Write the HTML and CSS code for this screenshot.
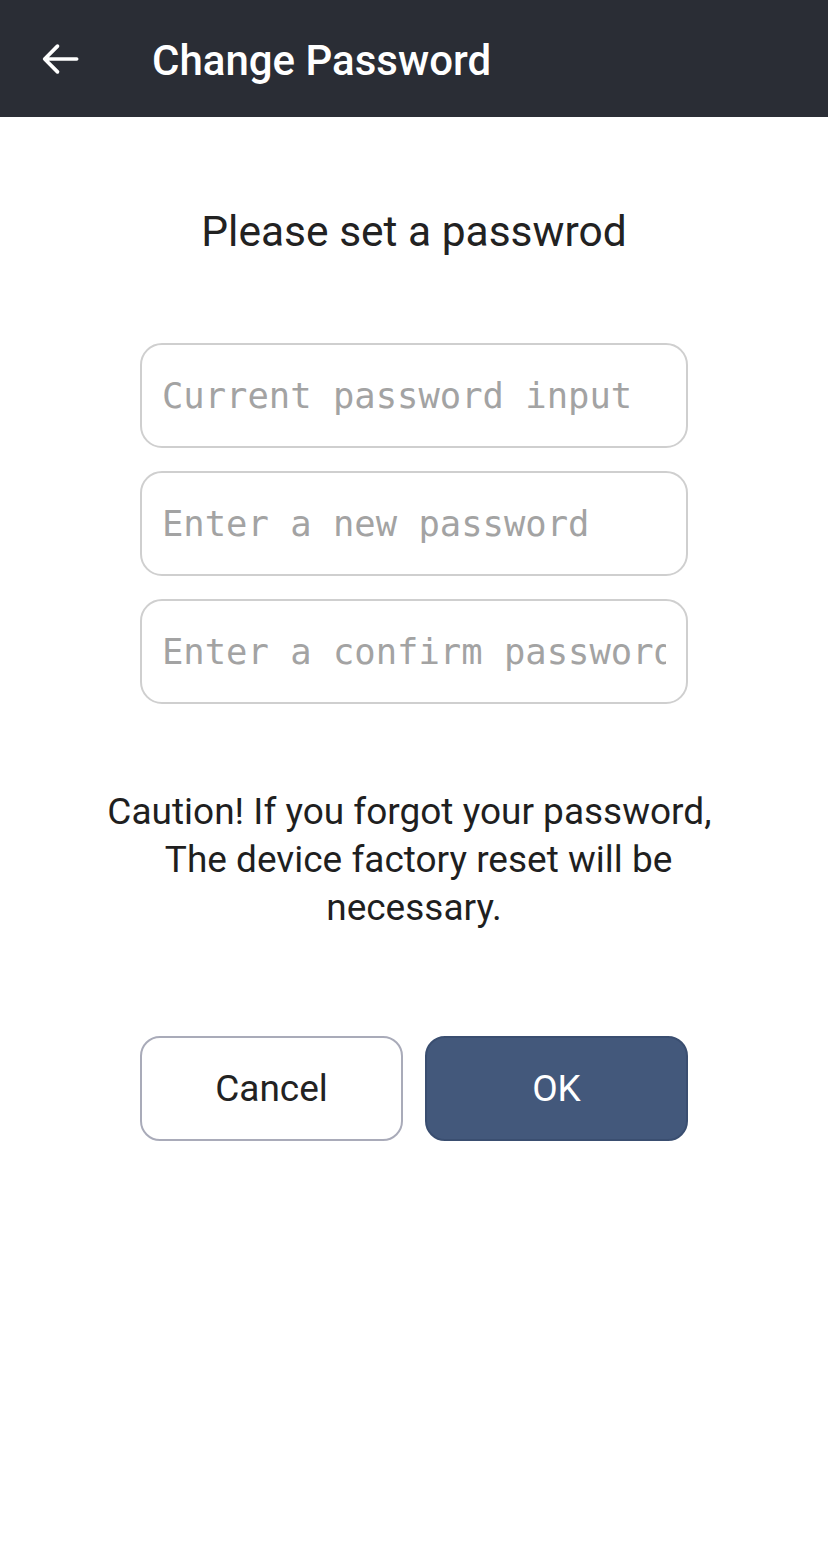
FILE: index.html
```html
<!DOCTYPE html>
<html lang="en">
<head>
<meta charset="utf-8">
<title>Change Password</title>
<link rel="stylesheet" href="styles.css">
</head>
<body>
<header class="appbar">
  <button class="back" aria-label="Back">
    <svg width="40" height="40" viewBox="0 0 24 24"><path d="M22 12H2.8M10.5 4.3 2.8 12l7.7 7.7" fill="none" stroke="#fff" stroke-width="2.2" stroke-linecap="round" stroke-linejoin="round"/></svg>
  </button>
  <h1 class="title">Change Password</h1>
</header>
<main class="content">
  <h2 class="heading">Please set a passwrod</h2>
  <form class="fields">
    <input class="field" type="password" placeholder="Current password input">
    <input class="field" type="password" placeholder="Enter a new password">
    <input class="field" type="password" placeholder="Enter a confirm password">
  </form>
  <p class="caution">Caution! If you forgot your password,&nbsp;<br>&nbsp;The device factory reset will be<br>necessary.</p>
  <div class="actions">
    <button class="btn btn-cancel">Cancel</button>
    <button class="btn btn-ok">OK</button>
  </div>
</main>
</body>
</html>
```
FILE: styles.css
```css
* { box-sizing: border-box; }
html, body { margin: 0; padding: 0; background: #fff; }
body { font-family: Roboto, "Noto Sans", sans-serif; color: #222; width: 828px; height: 1544px; }
.appbar {
  height: 117px;
  background: #2a2d35;
  display: flex;
  align-items: center;
  padding-left: 40px;
}
.back {
  background: none; border: 0; padding: 0; margin: 0;
  width: 40px; height: 40px; display: flex;
}
.title {
  margin: 0 0 0 72px;
  color: #fff;
  font-weight: 500;
  font-size: 42px;
  line-height: 1;
  padding-top: 4px;
}
.content {
  display: flex;
  flex-direction: column;
  align-items: center;
}
.heading {
  margin: 90px 0 0;
  font-weight: 400;
  font-size: 42.5px;
  line-height: 50px;
  color: #222;
}
.fields {
  margin-top: 86px;
  display: flex;
  flex-direction: column;
  gap: 23px;
}
.field {
  width: 548px;
  height: 105px;
  border: 2px solid #cfcfcf;
  border-radius: 22px;
  padding: 0 20px;
  font-family: "DejaVu Sans Mono", monospace;
  font-size: 35.5px;
  color: #333;
  outline: none;
}
.field::placeholder { color: #a3a3a3; }
.caution {
  margin: 84px 0 0;
  text-align: center;
  font-size: 37px;
  line-height: 48px;
  color: #1f1f1f;
}
.actions {
  margin-top: 104px;
  display: flex;
  gap: 22px;
}
.btn {
  width: 263px;
  height: 105px;
  border-radius: 20px;
  font-family: Roboto, sans-serif;
  font-size: 37px;
}
.btn-cancel {
  background: #fff;
  border: 2px solid #a9abb9;
  color: #222;
}
.btn-ok {
  background: #43587b;
  border: 2px solid #3a4e70;
  color: #fff;
}
```
